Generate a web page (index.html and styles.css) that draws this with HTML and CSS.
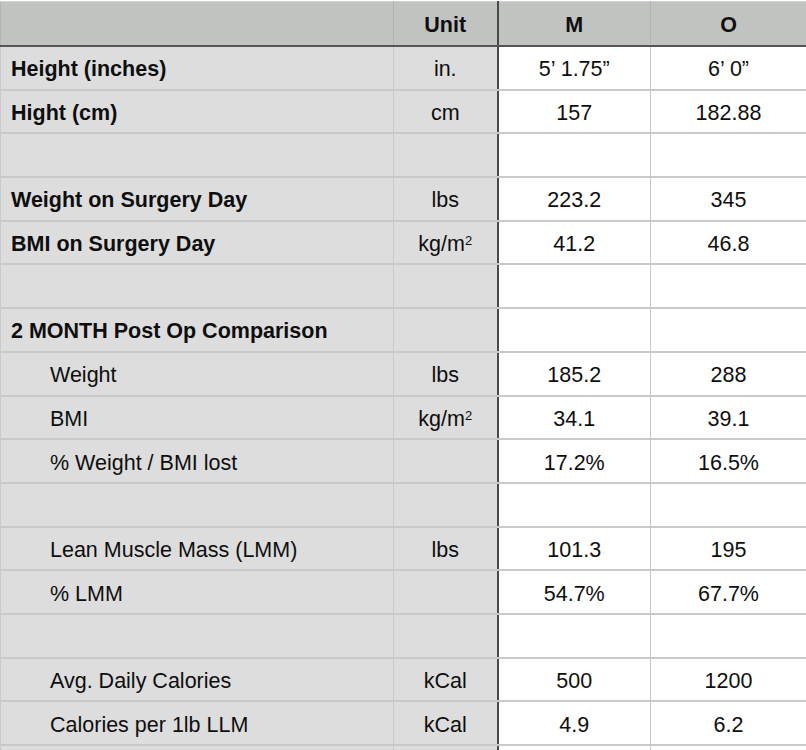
FILE: index.html
```html
<!DOCTYPE html>
<html>
<head>
<meta charset="utf-8">
<link rel="stylesheet" href="styles.css">
</head>
<body>
<table class="sheet">
  <colgroup>
    <col class="c-label"><col class="c-unit"><col class="c-m"><col class="c-o">
  </colgroup>
  <thead>
    <tr class="head"><th class="label"></th><th class="unit">Unit</th><th class="val">M</th><th class="val">O</th></tr>
  </thead>
  <tbody>
    <tr><td class="label bold">Height (inches)</td><td class="unit">in.</td><td class="val">5’ 1.75”</td><td class="val">6’ 0”</td></tr>
    <tr><td class="label bold">Hight (cm)</td><td class="unit">cm</td><td class="val">157</td><td class="val">182.88</td></tr>
    <tr><td class="label"></td><td class="unit"></td><td class="val"></td><td class="val"></td></tr>
    <tr><td class="label bold">Weight on Surgery Day</td><td class="unit">lbs</td><td class="val">223.2</td><td class="val">345</td></tr>
    <tr><td class="label bold">BMI on Surgery Day</td><td class="unit">kg/m<sup>2</sup></td><td class="val">41.2</td><td class="val">46.8</td></tr>
    <tr><td class="label"></td><td class="unit"></td><td class="val"></td><td class="val"></td></tr>
    <tr><td class="label bold">2 MONTH Post Op Comparison</td><td class="unit"></td><td class="val"></td><td class="val"></td></tr>
    <tr><td class="label indent">Weight</td><td class="unit">lbs</td><td class="val">185.2</td><td class="val">288</td></tr>
    <tr><td class="label indent">BMI</td><td class="unit">kg/m<sup>2</sup></td><td class="val">34.1</td><td class="val">39.1</td></tr>
    <tr><td class="label indent">% Weight / BMI lost</td><td class="unit"></td><td class="val">17.2%</td><td class="val">16.5%</td></tr>
    <tr><td class="label"></td><td class="unit"></td><td class="val"></td><td class="val"></td></tr>
    <tr><td class="label indent">Lean Muscle Mass (LMM)</td><td class="unit">lbs</td><td class="val">101.3</td><td class="val">195</td></tr>
    <tr><td class="label indent">% LMM</td><td class="unit"></td><td class="val">54.7%</td><td class="val">67.7%</td></tr>
    <tr><td class="label"></td><td class="unit"></td><td class="val"></td><td class="val"></td></tr>
    <tr><td class="label indent">Avg. Daily Calories</td><td class="unit">kCal</td><td class="val">500</td><td class="val">1200</td></tr>
    <tr><td class="label indent">Calories per 1lb LLM</td><td class="unit">kCal</td><td class="val">4.9</td><td class="val">6.2</td></tr>
    <tr><td class="label"></td><td class="unit"></td><td class="val"></td><td class="val"></td></tr>
  </tbody>
</table>
</body>
</html>
```

FILE: styles.css
```css
html, body {
  margin: 0;
  padding: 0;
  background: #ffffff;
  overflow: hidden;
}
body {
  font-family: "Liberation Sans", Arial, sans-serif;
  font-size: 21.5px;
  color: #0e0e0e;
  height: 750px;
}
.sheet {
  border-collapse: collapse;
  table-layout: fixed;
  width: 806px;
  margin-top: 1px;
}
.c-label { width: 393px; }
.c-unit { width: 104px; }
.c-m { width: 153px; }
.c-o { width: 156px; }

.sheet th, .sheet td {
  padding: 3px 0 0 0;
  border: 1px solid #c9c9c9;
  border-bottom-width: 2px;
  border-top-width: 0;
  height: 38.7px;
  line-height: 24px;
  vertical-align: middle;
  white-space: nowrap;
  overflow: hidden;
}
.head th {
  height: 40px;
  background: #c1c3c1;
  border-color: #b3b3b3;
  border-top: 1px solid #d4d4d4;
  border-bottom: 2px solid #555555;
  font-weight: bold;
  font-size: 21.5px;
  text-align: center;
}
.label {
  background: #dddddd;
  text-align: left;
  padding-left: 10px !important;
}
.unit {
  background: #dddddd;
  text-align: center;
  border-right: 2px solid #4a4a4a !important;
}
.val {
  background: #ffffff;
  text-align: center;
}
.bold {
  font-weight: bold;
}
.indent {
  padding-left: 49px !important;
}
sup {
  font-size: 13px;
  vertical-align: 6px;
  line-height: 0;
}
```
